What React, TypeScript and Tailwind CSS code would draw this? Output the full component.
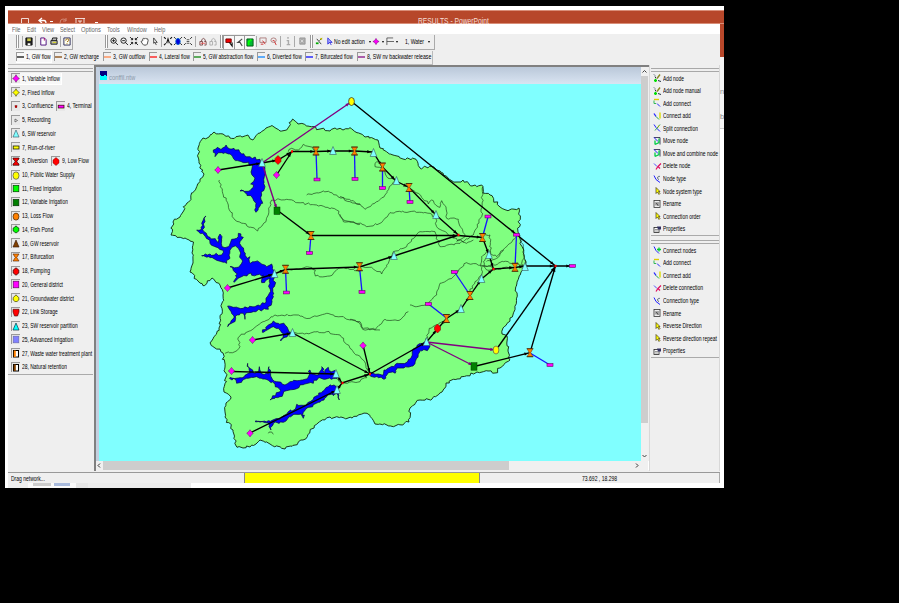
import React, { useLayoutEffect, useRef, useState } from "react";

type Pt = [number, number];

/* Single-line label squeezed horizontally to a given width. */
function Label({ children, w, className = "" }: { children: string; w: number; className?: string }) {
  const ref = useRef<HTMLSpanElement>(null);
  const [k, setK] = useState(0.75);
  useLayoutEffect(() => {
    if (ref.current) setK(w / ref.current.offsetWidth);
  }, [w, children]);
  return (
    <span className={"block shrink-0 whitespace-nowrap " + className} style={{ width: w }}>
      <span ref={ref} className="inline-block origin-left" style={{ transform: `scaleX(${k})` }}>
        {children}
      </span>
    </span>
  );
}

function parse(s: string): Pt[] {
  return s.trim().split(/\s+/).map((p) => p.split(",").map(Number) as Pt);
}

/* Adds a repeatable irregularity to a line, for coasts and rivers. */
function rough(s: string, amp: number, closed = false, step = 7): string {
  const pts = parse(s);
  let seed = 17;
  const rnd = () => {
    seed = (seed * 16807) % 2147483647;
    return seed / 2147483647 - 0.5;
  };
  if (closed) pts.push(pts[0]);
  const out: Pt[] = [pts[0]];
  for (let i = 1; i < pts.length; i++) {
    const [ax, ay] = pts[i - 1];
    const [bx, by] = pts[i];
    const d = Math.hypot(bx - ax, by - ay);
    const n = Math.max(1, Math.round(d / step));
    for (let j = 1; j < n; j++) {
      const t = j / n;
      out.push([ax + (bx - ax) * t + rnd() * amp, ay + (by - ay) * t + rnd() * amp]);
    }
    out.push([bx, by]);
  }
  return "M" + out.map((p) => p[0].toFixed(1) + " " + p[1].toFixed(1)).join("L") + (closed ? "Z" : "");
}

const coast =
  "204,174 199,163 198,148 203,138 209,137 214,132 223,134 230,138 242,137 248,135 253,140 260,133 266,128 272,125.500 280,131 288,128 292.700,119 298,124 308,126 320,129 330,131 335,128 343,130 350,127.700 357,132.700 365,137 378,140 380,148 393,155 403,159 416,159.300 420,168 433,166.700 443,173 448,178 457,182 463,180 472,186 481.700,185 483,193 490,195 500,207 508,210.700 519,208 519,235 523,252 526,262 523,270 517,283 515,308 510,318 503,328 502,334 507,336 508,350 510,360 500,368 495,373 488,371 477,372 457,379 446,383 442,392 432,399 420,400 410,408 409,422 395,426 375,424 367,413.300 352,418 330,417 318,423 303,440 285,449 270,444 260,440 250,447 237,447.300 233,430 225,417 226,403 231,397 224,392 226,377 223,353 215,348 210,342.700 219,328 223,295 220,285 212,278 203,285.700 190,272 193,263 192,253 193.500,242 185,238 171,235 173,222 180,217 187,203";

const lakesNW = [
  "160,217 168,207 172,202 185,208 198,195 203,203 222,205 245,222 270,230 300,238 305,250 315,262 313,290 315,320 305,345 308,370 300,378 288,397 284,390 288,370 275,350 260,340 240,333 270,332 280,322 272,312 283,300 275,270 278,255 255,248 222,238 210,222 185,218 165,230",
  "138,408 135,425 130,432 132,455 150,472 175,488 180,462 186,470 184,490 195,503 205,500 215,478 230,475 235,460 250,472 240,485 245,500 252,515 262,535 270,530 272,550 285,545 300,548 320,560 335,552 343,575 343,620 335,660 325,688 300,690 280,695 257,700 255,718 250,700 232,705 225,725 203,740 222,708 203,678 220,682 250,685 285,680 315,670 328,640 330,595 305,608 310,585 290,585 265,582 245,590 222,607 232,582 210,560 235,562 245,550 240,525 235,505 225,498 212,508 207,525 210,535 200,550 165,538 145,530 125,527 150,522 185,525 190,512 165,500 150,490 128,460 110,450 125,448 125,430 133,412",
];
const lakesSW = [
  "307,247 325,225 340,213 355,220 375,225 385,240 395,248 375,262 362,273 372,252 355,235 340,230 325,238",
  "208,385 240,383 270,370 263,340 275,358 280,368 295,365 298,350 303,370 325,372 327,350 332,378 350,395 375,405 390,395 425,390 445,380 450,360 458,372 475,375 485,350 495,368 505,352 515,365 528,365 530,385 495,388 475,384 460,400 430,404 410,416 380,422 360,440 330,450 362,422 345,402 315,387 290,380 260,385 230,400 228,390",
  "285,515 325,512 360,508 385,485 405,478 410,463 430,466 460,448 485,428 505,410 522,405 530,415 535,430 538,450 530,430 500,440 480,457 460,464 430,487 430,505 423,492 400,494 370,517 338,522 333,540 325,518",
];
const lakesSE = [
  "60,368 85,372 98,376 102,360 132,350 142,340 172,336 187,315 187,300 202,285 225,275 240,288 232,302 212,301 204,322 189,348 162,354 142,354 138,365 112,373 102,388 85,383 62,379",
];

const riversNW = [
  "178,300 190,345 205,375 225,420 250,430 293,453 318,425 335,360 380,358 410,368 470,375 530,390 550,420 600,433",
  "440,345 490,333 530,345 570,365 600,373",
  "385,215 395,205 415,210 430,193 450,200 465,214",
];
const riversNE = [
  "0,350 40,362 75,388 110,365 135,345 155,315 165,300 140,290 130,265 105,260 105,250 118,245",
  "0,403 10,425 40,425 80,440 120,430 150,398 210,395 270,400 285,410 290,440 330,470 380,490 400,480",
  "210,325 235,340 265,372 275,360 300,382 305,362 318,380 320,415 355,418 375,470 350,485",
  "60,560 95,562 125,582 140,560 160,515 200,500 240,455 285,455 300,500 360,490 400,465 425,410 428,320",
  "430,465 450,465 452,520 430,545 440,570 520,562",
  "425,560 460,555 490,545 560,555",
  "440,545 470,535 500,500 530,470",
  "540,465 550,500 553,530 545,550 550,570 560,560 555,540",
];
const riversSW = [
  "235,262 240,258 285,232 345,195 400,195 450,205 500,190 540,200 590,215 610,235 660,240",
  "235,262 240,290 225,305 195,310",
  "397,248 440,250 500,245 540,255 570,295 610,330 628,372 600,395 545,400 528,385",
  "380,60 450,52 466,60 466,78 510,78 535,55 580,58 600,65",
  "325,550 335,546 340,553",
];
const riversSE = [
  "0,208 30,215 38,238 75,240 105,208 150,210 175,185",
  "180,165 200,170 235,160 260,135 270,100 310,80 350,38 400,48 425,50 430,60",
  "360,125 375,95 395,75 395,20 410,5 440,20 460,0",
  "228,275 238,235 262,225 290,210",
];

const blackLinks = [
  "218,170 262,163 278,160 292,151.500",
  "276.500,175 292,151.500",
  "292,151.500 316,151.500 333,151 354.500,151 373,152 382.500,167 396,181 409,187.500 436,215 458.500,235",
  "277,210 311,235.500 458.500,235.500 482.500,237.500 489,255 493.500,269 515,267.500 525,266 555.500,266 572,266",
  "227.500,288 274,274 285.500,269.500 359.500,267 394,256 458.500,235",
  "351.500,101.500 516.500,234.500 555.500,266",
  "252.500,340 292.500,333 370,374",
  "231.500,371.500 336,374 342,383 370,374",
  "250,433 337,390 342,383",
  "363,345 370,374 426.500,342 437.500,329 446.500,318.500 461,309 470,295.500 481.500,279 493.500,269",
  "474,366.500 530,352.700 555.500,266",
  "496,350 555.500,266",
];
const purpleLinks = ["262,163 351,102", "262,163 277,210", "426.500,342 496,350", "426.500,342 474,366"];
const blueLinks = [
  "316,151 317,179", "354.500,151 355,179", "382.500,167 382.500,188", "409,187 410,202", "311,235 309.500,253",
  "285.500,269 286.500,292", "359.500,267 362,292", "482.500,237 488,217", "515,267 516.500,235", "470,295 454.500,272",
  "446.500,318 428.500,304", "530,353 550,365",
];

const diamonds = parse("218,170 276.500,175 227.500,288 252.500,340 231.500,371 250,433.300 363,345.500");
const lozenges = parse("278,160 437.500,328.500");
const dots = parse("292,151.500 458.500,235 493.500,269 555.500,266 370,374 342.500,383");
const forks = parse("316,151 354.500,151 382.500,167 409,187.500 311,235.500 482.500,237.500 285.500,269.300 359.500,266.700 515,267.300 470,295.500 446.500,318.500 530,352.700");
const tris = parse("262,163 333,151 373.500,153 396.500,181 436,215 394,256 489,255 525,267 481.500,279 461,309 426.500,342 274.500,274 292.500,333 336,374 337,390");
const rects = parse("317,179.500 355,179 382.500,188 410,202 309.500,253 286.500,292.500 362,292 488,216.500 516.500,234.700 572.500,266 454.500,272 428.500,304 550,365");

function arrows(list: string[]) {
  const out: string[] = [];
  for (const l of list) {
    const p = parse(l);
    for (let i = 1; i < p.length; i++) {
      const a = Math.atan2(p[i][1] - p[i - 1][1], p[i][0] - p[i - 1][0]);
      const x = p[i][0] - 2 * Math.cos(a);
      const y = p[i][1] - 2 * Math.sin(a);
      const c = (d: number) => `${(x - 4 * Math.cos(a + d)).toFixed(1)},${(y - 4 * Math.sin(a + d)).toFixed(1)}`;
      out.push(`${x.toFixed(1)},${y.toFixed(1)} ${c(0.4)} ${c(-0.4)}`);
    }
  }
  return out;
}

function Zone({ x, y, lakes, rivers }: { x: number; y: number; lakes: string[]; rivers: string[] }) {
  return (
    <g transform={`translate(${x} ${y}) scale(.33333)`}>
      {rivers.map((r) => (
        <path key={r} d={rough(r, 6)} fill="none" stroke="#143014" strokeWidth="2.200" opacity=".85" />
      ))}
      {lakes.map((l) => (
        <path key={l} d={rough(l, 8, true)} fill="#0000ff" stroke="#00003c" strokeWidth="2" />
      ))}
    </g>
  );
}

function NetworkMap() {
  return (
    <svg className="block h-[377px] w-[542px] shrink-0 bg-[#80ffff]" viewBox="99 84 542 377">
      <path d={rough(coast, 2.8, true, 2.6)} fill="#80ff80" stroke="#0c240c" strokeWidth=".9" />
      <Zone x={160} y={80} lakes={lakesNW} rivers={riversNW} />
      <Zone x={340} y={80} lakes={[]} rivers={riversNE} />
      <Zone x={160} y={250} lakes={lakesSW} rivers={riversSW} />
      <Zone x={350} y={250} lakes={lakesSE} rivers={riversSE} />
      {blueLinks.map((l) => <polyline key={l} points={l} fill="none" stroke="#1414ff" strokeWidth="1.300" />)}
      {blackLinks.map((l) => <polyline key={l} points={l} fill="none" stroke="#000" strokeWidth="1.350" />)}
      {purpleLinks.map((l) => <polyline key={l} points={l} fill="none" stroke="#800080" strokeWidth="1.400" />)}
      {arrows(blackLinks).map((a, i) => <polygon key={i} points={a} />)}
      {arrows(purpleLinks).map((a, i) => <polygon key={i} points={a} fill="#800080" />)}
      {tris.map(([x, y]) => (
        <path key={`${x}-${y}`} d={`M${x} ${y - 4.5}L${x + 3.3} ${y + 3.500}H${x - 3.3}Z`} fill="#80ffff" stroke="#38595f" strokeWidth=".6" />
      ))}
      {forks.map(([x, y]) => (
        <g key={`${x}-${y}`}>
          <path d={`M${x - 3} ${y - 4}H${x + 3}L${x + 0.7} ${y}L${x + 3} ${y + 4}H${x - 3}L${x - 0.7} ${y}Z`} fill="#ff8000" stroke="#5c3510" strokeWidth=".5" />
          <path d={`M${x - 3.300} ${y - 4}h6.600M${x - 3.300} ${y + 4}h6.600`} stroke="#402000" strokeWidth=".8" />
        </g>
      ))}
      {rects.map(([x, y]) => <rect key={`${x}-${y}`} x={x - 3} y={y - 1.4} width="6" height="2.800" fill="#ff00ff" stroke="#60105c" strokeWidth=".6" />)}
      {diamonds.map(([x, y]) => (
        <path key={`${x}-${y}`} d={`M${x} ${y - 3.6}L${x + 1.5} ${y - 1.5}L${x + 3.300} ${y}L${x + 1.5} ${y + 1.500}L${x} ${y + 3.600}L${x - 1.5} ${y + 1.500}L${x - 3.3} ${y}L${x - 1.5} ${y - 1.500}Z`} fill="#ff00ff" stroke="#600060" strokeWidth=".5" />
      ))}
      {lozenges.map(([x, y]) => (
        <path key={`${x}-${y}`} d={`M${x} ${y - 4.5}L${x + 3} ${y - 1.500}V${y + 1.500}L${x} ${y + 4.500}L${x - 3} ${y + 1.500}V${y - 1.500}Z`} fill="#f00" stroke="#700" strokeWidth=".5" />
      ))}
      {dots.map(([x, y]) => <rect key={`${x}-${y}`} x={x - 1} y={y - 1.2} width="2" height="2.400" fill="#f00" />)}
      <ellipse cx="351.500" cy="101.500" rx="2.900" ry="4" fill="#ff0" stroke="#333" strokeWidth=".8" />
      <ellipse cx="496" cy="350" rx="2.900" ry="4" fill="#ff0" stroke="#665" strokeWidth=".8" />
      <rect x="274" y="207" width="6" height="7.500" fill="#008000" stroke="#003800" strokeWidth=".5" />
      <rect x="471" y="362.700" width="6" height="7.500" fill="#008000" stroke="#003800" strokeWidth=".5" />
    </svg>
  );
}

/* ---------- node palette ---------- */

const star = "M4 .7L5.300 3L7.400 4.500L5.300 6L4 8.300L2.700 6L.6 4.500L2.700 3Z";
const nodeGlyphs: Record<string, React.ReactNode> = {
  variable: <path d={star} fill="#f0f" stroke="#505" strokeWidth=".5" />,
  fixed: <path d={star} fill="#ff0" stroke="#440" strokeWidth=".6" />,
  confluence: <rect x="3" y="3.500" width="2" height="2.200" fill="#c00" stroke="#500" strokeWidth=".3" />,
  terminal: <rect x="1.200" y="3.200" width="5.800" height="2.800" fill="#f0f" stroke="#300" strokeWidth=".7" />,
  recording: <path d="M3 3L5.500 4.500L3 6Z" fill="#fff" stroke="#333" strokeWidth=".6" />,
  reservoir: <path d="M4 1L7 8H1Z" fill="#80ffff" stroke="#356" strokeWidth=".6" />,
  river: <rect x="1.200" y="3" width="5.800" height="3" fill="#ff0" stroke="#220" strokeWidth=".8" />,
  diversion: <path d="M1 1H7V2L5 4V5L7 7V8.300H1V7L3 5V4L1 2Z" fill="#e00" stroke="#200" strokeWidth=".6" />,
  lowflow: <path d="M4 .5L7 3V6L4 8.500L1 6V3Z" fill="#f00" stroke="#600" strokeWidth=".4" />,
  supply: <ellipse cx="4" cy="4.600" rx="3" ry="3.700" fill="#ff0" stroke="#554" strokeWidth=".7" />,
  firrigation: <rect x="1.200" y="1.500" width="5.600" height="6.200" fill="#0f0" stroke="#040" strokeWidth=".7" />,
  virrigation: <rect x="1.200" y="1.500" width="5.600" height="6.200" fill="#008000" stroke="#030" strokeWidth=".7" />,
  loss: <ellipse cx="4" cy="4.600" rx="2.900" ry="3.500" fill="#ff8000" stroke="#420" strokeWidth=".7" />,
  pond: <path d="M4 .8L5 2L6.800 3V6L4 8L1.200 6V3L3 2Z" fill="#0f0" stroke="#030" strokeWidth=".7" />,
  gw: <path d="M4 1L7 8H1Z" fill="#804000" stroke="#310" strokeWidth=".6" />,
  bifurcation: <path d="M1 1H7L4.700 4.500L7 8H1L3.300 4.500Z" fill="#ff8000" stroke="#520" strokeWidth=".6" />,
  pumping: <path d="M4 .8L6.800 3V6L4 8.200L1.200 6V3Z" fill="#f00" stroke="#300" strokeWidth=".7" />,
  general: <rect x="1.200" y="1.200" width="5.600" height="6.600" fill="#f0f" stroke="#505" strokeWidth=".6" />,
  district: <path d="M4 .8L5 2L6.800 3.500V6L5 7.500H3L1.200 6V3.500L3 2Z" fill="#ff0" stroke="#440" strokeWidth=".7" />,
  storage: <path d="M1 1.300H7V4L5.500 8H2.500L1 4Z" fill="#f00" stroke="#400" strokeWidth=".6" />,
  partition: <path d="M4 1L7 8H1Z" fill="#0ff" stroke="#134" strokeWidth=".7" />,
  advanced: <rect x="1.200" y="1.200" width="5.600" height="6.600" fill="#8080ff" stroke="#66a" strokeWidth=".6" />,
  waste: <g><rect x="1.500" y="1.500" width="5" height="6.500" fill="#fff" stroke="#000" /><path d="M2.800 1.500v6.500" stroke="#ff8000" strokeWidth="2" /></g>,
  natural: <g><rect x="1.500" y="1.500" width="5" height="6.500" fill="#fff" stroke="#000" /><path d="M2.800 1.500v6.500" stroke="#804000" strokeWidth="2" /></g>,
};

function NodeItem({ icon, text, w, active = false }: { icon: string; text: string; w: number; active?: boolean }) {
  return (
    <div className={"flex h-[12px] items-center gap-[2px] border-r border-b pr-px " + (active ? "border-white bg-[#f8f8f8]" : "border-transparent")}>
      <svg className="h-[10px] w-[9px] shrink-0 border-t border-l border-[#999] bg-[#e8e8e8]" viewBox="0 0 8 9">{nodeGlyphs[icon]}</svg>
      <Label w={w}>{text}</Label>
    </div>
  );
}

const palette: [string, string, number][][] = [
  [["variable", "1, Variable Inflow", 38]],
  [["fixed", "2, Fixed Inflow", 32]],
  [["confluence", "3, Confluence", 31], ["terminal", "4, Terminal", 25]],
  [["recording", "5, Recording", 29]],
  [["reservoir", "6, SW reservoir", 34]],
  [["river", "7, Run-of-river", 33]],
  [["diversion", "8, Diversion", 26], ["lowflow", "9, Low Flow", 27]],
  [["supply", "10, Public Water Supply", 53]],
  [["firrigation", "11, Fixed Irrigation", 40]],
  [["virrigation", "12, Variable Irrigation", 46]],
  [["loss", "13, Loss Flow", 31]],
  [["pond", "14, Fish Pond", 31]],
  [["gw", "16, GW reservoir", 37]],
  [["bifurcation", "17, Bifurcation", 32]],
  [["pumping", "18, Pumping", 28]],
  [["general", "20, General district", 41]],
  [["district", "21, Groundwater district", 52]],
  [["storage", "22, Link Storage", 36]],
  [["partition", "23, SW reservoir partition", 56]],
  [["advanced", "25, Advanced irrigation", 51]],
  [["waste", "27, Waste water treatment plant", 70]],
  [["natural", "28, Natural retention", 45]],
];

/* ---------- action palette ---------- */

const actionGlyphs: Record<string, React.ReactNode> = {
  addnode: <g><path d="M1 1l1 1M2 3l1 2M5 7l3 1" stroke="#234" /><path d="M7 1L4 5" stroke="#888820" strokeWidth="1.400" /><path d="M1 7h3M2.500 5.500v3" stroke="#0d0" strokeWidth="1.600" /></g>,
  addconnect: <g><path d="M1 1h5" stroke="#dc0" strokeWidth="1.400" /><path d="M1 2v3h2" stroke="#3b5" fill="none" /><path d="M4 5l3 3" stroke="#22f" /></g>,
  connectadd: <g><path d="M1 2l2 3" stroke="#22f" strokeWidth="1.300" /><path d="M3 5l3 3" stroke="#2a4" /><path d="M7 1v6" stroke="#dd0" strokeWidth="1.400" /></g>,
  split: <g><path d="M1 1l2 3l4 4" stroke="#22f" fill="none" /><path d="M7 1L2 7" stroke="#3a5" /><path d="M6 2L5 4" stroke="#aa0" /></g>,
  move: <g><path d="M1 1h6v7" fill="none" stroke="#335" strokeWidth=".9" /><path d="M1 1l4 4" stroke="#22f" /><path d="M6 2v4L2 8M2 4v4" stroke="#0c4" strokeWidth="1.300" fill="none" /></g>,
  delete: <g><path d="M1 2l3 3" stroke="#22f" strokeWidth=".8" /><path d="M8 2L5 5L3 8M5 5l2 2" stroke="#e01060" fill="none" strokeWidth="1.200" /></g>,
  type: <g><path d="M1 1l2 4l4 3" stroke="#22f" fill="none" /><path d="M7 2C4 1 4 5 6 5" stroke="#567" fill="none" /></g>,
  cursor: <path d="M3 1v6l1.500-1.500L6 8L7 7L5.500 5H7Z" fill="#ff0" stroke="#443a20" strokeWidth=".7" />,
  rename: <g><rect x="1" y="1" width="6" height="7" fill="#eee" stroke="#333" strokeWidth=".8" /><path d="M3 3v3M5 2.500v4M3 3l2 3" stroke="#222" strokeWidth=".7" /></g>,
  properties: <g><rect x="1" y="3" width="5" height="5" fill="#fff" stroke="#222" strokeWidth=".8" /><path d="M4 2h4v3H5Z" fill="#336" /><path d="M2 5h3M2 6.500h3" stroke="#555" strokeWidth=".6" /></g>,
  connect: <g><path d="M1 1l2 4l3 3" stroke="#22f" fill="none" /><path d="M4 4h4M6 2v4" stroke="#0c3" strokeWidth="1.300" /></g>,
};

function ActionItem({ icon, text, w }: { icon: string; text: string; w: number }) {
  return (
    <div className="flex flex-1 items-center gap-px pl-[2px]">
      <svg className="h-[10px] w-[9px] shrink-0" viewBox="0 0 9 9">{actionGlyphs[icon]}</svg>
      <Label w={w}>{text}</Label>
    </div>
  );
}

const nodeActions: [string, string, number][] = [
  ["addnode", "Add node", 21], ["addnode", "Add node manual", 38], ["addconnect", "Add connect", 28], ["connectadd", "Connect add", 28],
  ["split", "Split connection", 35], ["move", "Move node", 25], ["move", "Move and combine node", 55], ["delete", "Delete node", 27],
  ["type", "Node type", 23], ["cursor", "Node system type", 39], ["rename", "Rename", 18], ["cursor", "Connection order", 38], ["properties", "Properties", 22],
];
const linkActions: [string, string, number][] = [
  ["connect", "Connect nodes", 33], ["addconnect", "Add connect", 28], ["connectadd", "Connect add", 28], ["delete", "Delete connection", 40],
  ["type", "Connection type", 36], ["rename", "Rename", 18], ["cursor", "Reverse Direction", 39], ["cursor", "Reverse direction repeat", 54], ["properties", "Properties", 22],
];

function Grip() {
  return (
    <div className="flex h-[5px] shrink-0 flex-col justify-between pt-px">
      <div className="h-px bg-[#a8a8a8]" />
      <div className="h-px bg-[#a8a8a8]" />
    </div>
  );
}

/* ---------- toolbars ---------- */

function Tool({ w, children, on = false }: { w: number; children?: React.ReactNode; on?: boolean }) {
  return (
    <div className={"flex h-[14px] shrink-0 items-center justify-center " + (on ? "border-t border-l border-[#999] bg-[#f8f8f8]" : "")} style={{ width: w }}>
      <svg className="h-[9px] w-[8px] overflow-visible" viewBox="0 0 9 10" fill="none" stroke="#111">{children}</svg>
    </div>
  );
}

function Bars() {
  return <div className="h-[13px] w-[3px] shrink-0 border-r border-l border-[#999] bg-white" />;
}

function Sep() {
  return <div className="mx-px h-[11px] w-px shrink-0 bg-[#aaa]" />;
}

function Drop() {
  return <div className="h-0 w-0 shrink-0 border-x-[1.5px] border-t-2 border-x-transparent border-t-black" />;
}

const flows: [string, string, number, number][] = [
  ["1, GW flow", "#000000", 25, 38], ["2, GW recharge", "#804000", 35, 49], ["3, GW outflow", "#ff8040", 32, 46], ["4, Lateral flow", "#ff0000", 31, 44],
  ["5, GW abstraction flow", "#008000", 50, 64], ["6, Diverted flow", "#0080ff", 35, 48], ["7, Bifurcated flow", "#0000ff", 38, 52], ["8, SW nv backwater release", "#800080", 64, 76],
];

const menus: [string, number, number][] = [
  ["File", 8.5, 15], ["Edit", 9, 15.5], ["View", 12, 18], ["Select", 15, 21], ["Options", 20, 26], ["Tools", 13, 19.5], ["Window", 20, 27.5], ["Help", 11, 20],
];

export default function App() {
  return (
    <div className="h-[603px] w-[899px] overflow-hidden bg-black pt-[6px] pl-[5px] font-['Liberation_Sans',Arial,sans-serif] text-[7.5px] leading-[9px] text-black">
      <div className="flex h-[482px] w-[719px] flex-col overflow-hidden bg-white">
        <div className="h-[4px] shrink-0" />
        <div className="ml-[3px] flex h-[14px] shrink-0 items-start border-t border-b border-[#d98e78] bg-[#b7472a] text-white">
          <svg className="h-[12px] w-[90px] shrink-0" viewBox="8 11 90 12" fill="none" stroke="#fff">
            <path d="M21.500 24v-5.500h7V24" strokeWidth=".8" />
            <path d="M42 18l-3 2.500l3 2.500M39 20.500h5q2 0 2 3" strokeWidth="1.300" />
            <path d="M50 21.500h3" />
            <path d="M60 23q0-4 3-4t3 2M66 18v3h-3" stroke="#d38874" />
            <path d="M75 18.500h10M76 18.500v5M84 18.500v5M78 21h4M80 21v3" strokeWidth=".8" />
            <path d="M95 22.500h3" />
          </svg>
          <div className="ml-[320px] pt-[5px] text-[9px] leading-[11px] text-[#f6dfd8]">
            <Label w={71}>RESULTS  -  PowerPoint</Label>
          </div>
        </div>
        <div className="relative flex h-[459px] shrink-0">
          <div className="ml-[3px] flex w-[712px] shrink-0 flex-col bg-[#efefef]">
            <div className="flex h-[10px] shrink-0 items-center bg-white pl-[3.500px] text-[#666]">
              {menus.map(([t, w, cell]) => (
                <div key={t} style={{ width: cell }} className="shrink-0"><Label w={w}>{t}</Label></div>
              ))}
            </div>
            <div className="flex h-[16px] shrink-0 items-center pl-[8px]">
              <div className="flex w-[57px] items-center border-r border-b border-[#aaa]">
                <Bars /><div className="w-[3px]" /><div className="h-[11px] w-px bg-[#aaa]" />
                <Tool w={11}><path d="M1 1h7v8H1Z" fill="#222" /><path d="M2.500 1.500h4v3h-4Z" fill="#c9c94a" stroke="none" /><path d="M3 7h3v2H3Z" fill="#fff" stroke="none" /></Tool>
                <Sep />
                <Tool w={11}><path d="M2 1h4l2 2v6H2Z" fill="#fff" stroke="#407" /><path d="M6 1v3" stroke="#a06" /></Tool>
                <Tool w={11}><path d="M2 4l1-3h5l-1 3M1 4h7v4H1Z" fill="#bbb" /><path d="M3 6h4" stroke="#dd0" /></Tool>
                <Sep />
                <Tool w={10}><path d="M1 1h7v8H1Z" fill="#ffe" stroke="#225" /><path d="M3 4q0-2 2-2t1.500 2l-2 1.500M4.500 7v1" stroke="#960" /></Tool>
              </div>
              <div className="ml-[32px] flex items-center border-b border-[#aaa]">
                <Bars />
                <Tool w={11}><circle cx="4" cy="4" r="3" /><path d="M6 6l3 3M2.500 4h3M4 2.500v3" /></Tool>
                <Tool w={10}><circle cx="4" cy="4" r="3" /><path d="M6 6l3 3M2.500 4h3" /></Tool>
                <Tool w={10}><path d="M0 0l3 3M9 0L6 3M0 9l3-3M9 9L6 6M3 1v2H1M6 1v2h2M3 8V6H1M6 8V6h2" /></Tool>
                <Tool w={11}><path d="M2 8L0 5l2-1V2q1-1 2 0q1-2 2 0q2-1 2 2L7 8l-1 1H3Z" fill="#fff" strokeWidth=".8" /></Tool>
                <Tool w={10}><path d="M3 1v6l1.500-1L6 9M3 1l4 5H5" strokeWidth=".8" /></Tool>
                <Sep />
                <Tool w={10}><path d="M0 0l2 2M9 0L7 2M0 9l2-2M9 9L7 7M3 7l1.500-5L6 7" strokeWidth="1.200" /></Tool>
                <Tool w={10}><path d="M0 0l2 2M9 0L7 2M0 9l2-2M9 9L7 7" /><ellipse cx="4.500" cy="5" rx="2.500" ry="3.500" fill="#00d" stroke="#06c" /></Tool>
                <Tool w={10}><path d="M0 0l2 2M9 0L7 2M0 9l2-2M9 9L7 7" /><path d="M3 3h3M3 5h3M3 7h3" stroke="#444" /></Tool>
                <div className="w-px" /><Sep />
                <Tool w={11}><path d="M1 5h3v4H1ZM6 5h2v4H6M3 5V3q2-3 4 0v2" stroke="#744" /><path d="M2 7h5" stroke="#e55" /></Tool>
                <Tool w={10}><path d="M1 5h3v4H1ZM6 5h2v4H6M3 5V3q2-3 4 0v2" stroke="#aaa" /></Tool>
                <div className="w-[2px]" /><Bars />
                <Tool w={11} on><path d="M1 1h6v4H1Z" fill="#e00" stroke="#700" /><path d="M5 5l3 4V5" strokeWidth="1.300" /></Tool>
                <Tool w={10} on><path d="M7 1L2 5h3M4 4l3 5" stroke="#444" strokeWidth="1.200" /></Tool>
                <Tool w={11} on><path d="M1 1h7v8H1Z" fill="#0b3" stroke="#051" /><path d="M3 8V4l3-2" stroke="#0f0" strokeWidth="2" /></Tool>
                <Sep />
                <Tool w={10}><path d="M1 1h7v5H1Z" stroke="#a77" /><path d="M4 4l3 4M2 8h3" stroke="#c22" /></Tool>
                <Tool w={11}><ellipse cx="4" cy="3.500" rx="3" ry="2.500" stroke="#a77" /><path d="M5 5l2 4M3 4h2" stroke="#c22" /></Tool>
                <Sep />
                <Tool w={11}><path d="M4.500 0v2M3 4h2v4M3 8.500h4" stroke="#aaa" strokeWidth="1.600" /></Tool>
                <Sep />
                <Tool w={11}><path d="M2 1h6v7H2Z" fill="#aaa" stroke="#999" /><path d="M3 3l3 3M6 3L3 6" stroke="#ddd" /></Tool>
              </div>
              <div className="ml-[3px] flex w-[125px] items-center border-r border-b border-[#aaa]">
                <Bars />
                <Tool w={12}><path d="M2 2l5 6M8 1L5 4" stroke="#333" /><path d="M1 7h3" stroke="#0a0" strokeWidth="2" /><path d="M6 2h2" stroke="#bb0" strokeWidth="2" /></Tool>
                <Tool w={9}><path d="M2 1v7l2-2l2 3M2 1l5 5H4" fill="#99f" stroke="#11d" strokeWidth=".8" /></Tool>
                <Label w={31}>No edit action</Label>
                <div className="w-[3.500px]" /><Drop />
                <Tool w={11}><path d="M4.500 1.500L6 4L8 5L6 6L4.500 8.500L3 6L1 5L3 4Z" fill="#f0f" stroke="#707" strokeWidth=".6" /></Tool>
                <Drop />
                <Tool w={12}><path d="M1 9V1h7M1 5h8" stroke="#333" strokeWidth=".8" /></Tool>
                <Drop />
                <div className="w-[7px]" />
                <Label w={19}>1, Water</Label>
                <div className="w-[4px]" /><Drop />
              </div>
            </div>
            <div className="flex h-[15px] shrink-0 items-center">
              <div className="flex h-[14px] w-[425px] items-center border-r border-b border-[#bbb] pl-[4px]">
                <div className="mr-[4px] h-[12px] w-px bg-[#bbb]" />
                {flows.map(([t, c, w, cell], i) => (
                  <div key={t} className="flex shrink-0" style={{ width: cell }}>
                    <div className={"flex h-[12px] items-center gap-[2px] border-r border-b " + (i === 0 ? "border-white bg-[#f8f8f8]" : "border-transparent")}>
                      <svg className="h-[9px] w-[8px] shrink-0 border-t border-l border-[#999]" viewBox="0 0 8 9"><path d="M0 4.500h8" stroke={c} strokeWidth="1.400" /></svg>
                      <Label w={w}>{t}</Label>
                    </div>
                  </div>
                ))}
              </div>
            </div>
            <div className="flex h-[406px] shrink-0">
              <div className="w-[86px] shrink-0">
                <div className="mt-[2px] w-[85px]">
                  <Grip />
                  <div className="flex h-[303px] flex-col border-b border-[#aaa] pl-[3px]">
                    {palette.map((row, i) => (
                      <div key={i} className="flex flex-1 items-center gap-px">
                        {row.map(([icon, text, w]) => <NodeItem key={text} icon={icon} text={text} w={w} active={i === 0} />)}
                      </div>
                    ))}
                  </div>
                </div>
              </div>
              <div className="flex w-[555px] shrink-0 flex-col border-t-2 border-l-2 border-[#808080]">
                <div className="flex h-[394px] shrink-0">
                  <div className="flex w-[545px] shrink-0 flex-col bg-[#c3d0e0] pl-[3px]">
                    <div className="flex h-[17px] shrink-0 items-center gap-[2px] bg-linear-to-b from-[#bac8d9] to-[#d9e4f2] text-[#8a98a8]">
                      <svg className="ml-px h-[9px] w-[7px]" viewBox="0 0 7 9"><path d="M0 0h7v9H0Z" fill="#0ff" /><path d="M0 0h7v5H6V4H4v1H1V4H0Z" fill="#000080" /></svg>
                      <div className="pt-[3px]"><Label w={26}>conffil.ntw</Label></div>
                    </div>
                    <NetworkMap />
                  </div>
                  <div className="flex h-[394px] w-[7px] shrink-0 flex-col bg-[#f0f0f0]">
                    <svg className="h-[9px] w-[7px]" viewBox="0 0 7 9"><path d="M1.500 5.500l2-2l2 2" fill="none" stroke="#444" /></svg>
                    <div className="h-[347px] bg-[#cdcdcd]" />
                    <div className="flex-1" />
                    <svg className="h-[9px] w-[7px]" viewBox="0 0 7 9"><path d="M1.500 3l2 2l2-2" fill="none" stroke="#444" /></svg>
                  </div>
                </div>
                <div className="flex h-[9px] shrink-0 items-center border-r border-white bg-[#f0f0f0]">
                  <svg className="h-[9px] w-[7px]" viewBox="0 0 7 9"><path d="M4 2.500l-2 2l2 2" fill="none" stroke="#333" /></svg>
                  <div className="h-[9px] w-[406px] bg-[#cdcdcd]" />
                  <svg className="ml-[125px] h-[9px] w-[6px]" viewBox="0 0 6 9"><path d="M2 2.500l2 2l-2 2" fill="none" stroke="#333" /></svg>
                </div>
              </div>
              <div className="w-[71px] shrink-0 border-r border-l border-[#d8d8d8] pl-px">
                <div className="mt-[2px] w-[68px]">
                  <Grip />
                  <div className="flex h-[164px] flex-col border-b border-[#aaa]">
                    {nodeActions.map(([i, t, w]) => <ActionItem key={t} icon={i} text={t} w={w} />)}
                  </div>
                  <div className="h-[3px]" />
                  <Grip />
                  <div className="flex h-[114px] flex-col border-b border-[#aaa]">
                    {linkActions.map(([i, t, w]) => <ActionItem key={t} icon={i} text={t} w={w} />)}
                  </div>
                </div>
              </div>
            </div>
            <div className="mt-px flex h-[11px] shrink-0 border-t border-[#999]">
              <div className="flex w-[236px] items-center pl-[3px]"><Label w={34}>Drag network...</Label></div>
              <div className="w-[236px] border-r border-l border-[#888] bg-[#ffff00]" />
              <div className="flex flex-1 items-center justify-center border-r border-[#aaa]"><Label w={35}>73.692 , 18.298</Label></div>
            </div>
          </div>
          <div className="flex w-[4px] shrink-0 flex-col bg-[#f4f4f4] text-[#888]">
            <div className="h-[33px] shrink-0 bg-[#b7472a]" />
            <div className="mt-[30px] h-[9px] shrink-0">n</div>
            <div className="mt-[16px] h-[9px] shrink-0">b</div>
            <div className="mt-[7px] h-px shrink-0 bg-[#ccc]" />
            <div className="flex-1 bg-white" />
          </div>
        </div>
        <div className="flex h-[5px] shrink-0 pl-[3px]">
          <div className="w-[20px] bg-[#eee]" />
          <div className="flex w-[48px] gap-[3px] bg-[#fafafa] pl-[5px]">
            <div className="h-[3px] w-[18px] bg-[#ccc]" />
            <div className="h-[3px] w-[16px] bg-[#a9bbdd]" />
          </div>
          <div className="w-[12px] bg-[#e6e6e6]" />
          <div className="w-[103px] bg-[#ececec]" />
        </div>
      </div>
    </div>
  );
}
